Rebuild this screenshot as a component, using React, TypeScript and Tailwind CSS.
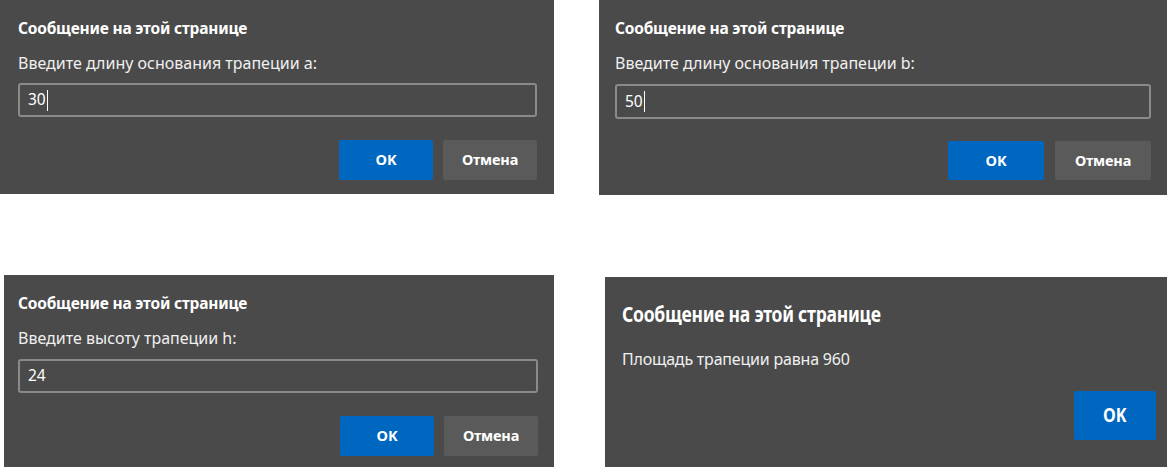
import React from "react";

const FONT = { fontFamily: '"Noto Sans", "Open Sans", sans-serif' };

function PromptDialog({
  className,
  label,
  value,
  caret,
  inputClass,
  buttonsClass,
  buttonClass,
}: {
  className: string;
  label: string;
  value: string;
  caret?: boolean;
  inputClass: string;
  buttonsClass: string;
  buttonClass: string;
}) {
  return (
    <div className={`bg-[#4a4a4a] flex flex-col shrink-0 ${className}`} style={FONT}>
      <div className="text-white font-bold text-[15.5px] leading-[20px] tracking-[-0.2px]">
        Сообщение на этой странице
      </div>
      <div className="mt-[15px] text-[#f0f0f0] text-[16px] leading-[20px]">{label}</div>
      <div
        className={`border-2 border-[#8a8a8a] rounded-[3px] flex items-center pl-[8px] text-white text-[15.5px] ${inputClass}`}
      >
        <span>{value}</span>
        {caret && <span className="inline-block w-px h-[21px] bg-white ml-px" />}
      </div>
      <div className={`flex justify-end ${buttonsClass}`}>
        <button className={`bg-[#0067c0] rounded-[2px] text-white font-bold text-[14.5px] ${buttonClass}`}>
          OK
        </button>
        <button className={`bg-[#5a5a5a] rounded-[2px] text-white font-bold text-[14.5px] tracking-[-0.2px] ${buttonClass}`}>
          Отмена
        </button>
      </div>
    </div>
  );
}

export default function App() {
  return (
    <div className="w-[1167px] h-[467px] bg-white overflow-hidden flex flex-col">
      <div className="flex items-start gap-[45px]">
        <PromptDialog
          className="w-[554px] h-[194px] pl-[18px] pr-[17px] pt-[18px]"
          label="Введите длину основания трапеции a:"
          value="30"
          caret
          inputClass="mt-[10px] h-[34px]"
          buttonsClass="mt-[23px] gap-[10px]"
          buttonClass="w-[94px] h-[40px]"
        />
        <PromptDialog
          className="w-[568px] h-[195px] pl-[16px] pr-[16px] pt-[18px]"
          label="Введите длину основания трапеции b:"
          value="50"
          caret
          inputClass="mt-[11px] h-[35px]"
          buttonsClass="mt-[22px] gap-[11px]"
          buttonClass="w-[96px] h-[39px]"
        />
      </div>
      <div className="mt-[80px] flex items-start">
        <PromptDialog
          className="ml-[4px] w-[550px] h-[192px] pl-[14px] pr-[16px] pt-[18px]"
          label="Введите высоту трапеции h:"
          value="24"
          inputClass="mt-[11px] h-[34px]"
          buttonsClass="mt-[23px] gap-[10px]"
          buttonClass="w-[94px] h-[40px]"
        />
        <div
          className="ml-[51px] mt-[2px] w-[562px] h-[190px] bg-[#4a4a4a] flex flex-col pl-[17px] pr-[11px] pt-[25px] shrink-0"
          style={FONT}
        >
          <div className="text-white font-bold text-[21px] leading-[24px] origin-left scale-x-[0.835] whitespace-nowrap tracking-[-0.3px]">
            Сообщение на этой странице
          </div>
          <div className="mt-[22px] text-[#f0f0f0] text-[17px] leading-[22px] origin-left scale-x-[0.94] whitespace-nowrap tracking-[-0.2px]">
            Площадь трапеции равна 960
          </div>
          <div className="mt-[21px] flex justify-end">
            <button className="w-[82px] h-[49px] bg-[#0067c0] rounded-[2px] text-white font-bold text-[19px]">
              <span className="inline-block scale-x-[0.85]">OK</span>
            </button>
          </div>
        </div>
      </div>
    </div>
  );
}
